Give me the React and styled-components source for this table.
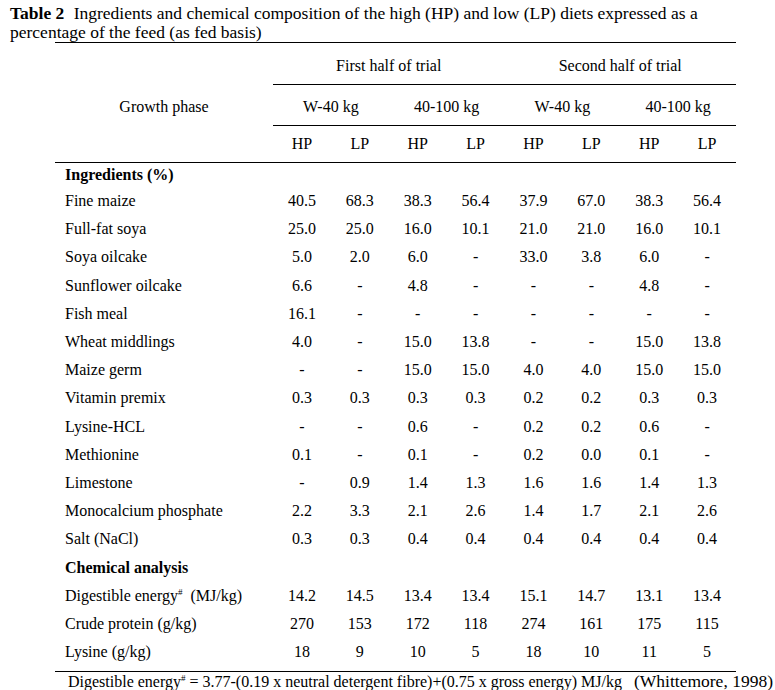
import React from "react";
import styled, { createGlobalStyle } from "styled-components";

const serif = `"Liberation Serif", "Times New Roman", serif`;

const GlobalStyle = createGlobalStyle`
  html, body {
    margin: 0;
    padding: 0;
    background: #fff;
  }
  body, table, td, th {
    font-family: ${serif};
    font-size: 16px;
    color: #000;
  }
`;

const Page = styled.div`
  width: 775px;
  padding-top: 4px;
  font-family: ${serif};
`;

const Caption = styled.p`
  margin: 0;
  padding-left: 10px;
  width: 735px;
  font-size: 17.5px;
  line-height: 19px;
`;

const Bold = styled.b`
  font-weight: bold;
  margin-right: 5px;
`;

const Table = styled.table`
  margin-left: 55px;
  width: 681px;
  table-layout: fixed;
  border-collapse: collapse;
  border-spacing: 0;
`;

const HeadCell = styled.th`
  font-weight: normal;
  text-align: center;
  line-height: 18px;
  padding: ${(p) => p.$pad};
  white-space: nowrap;
  border-top: ${(p) => (p.$top ? "1px solid #000" : "none")};
  border-bottom: ${(p) => (p.$rule ? "1px solid #000" : "none")};
`;

const Section = styled.td`
  font-weight: bold;
  padding: 0 0 0 10px;
  line-height: ${(p) => p.$h};
  text-align: left;
`;

const Label = styled.td`
  padding: 0 0 ${(p) => (p.$last ? "5px" : "0")} 10px;
  line-height: 28.2px;
  white-space: nowrap;
  border-bottom: ${(p) => (p.$last ? "1px solid #000" : "none")};
`;

const Value = styled.td`
  padding: 0 0 ${(p) => (p.$last ? "5px" : "0")};
  line-height: 28.2px;
  text-align: center;
  border-bottom: ${(p) => (p.$last ? "1px solid #000" : "none")};
`;

const Mark = styled.span`
  font-size: 9px;
  line-height: 0;
  vertical-align: 6px;
`;

const Footnote = styled.div`
  padding-left: 68px;
  line-height: 18px;
  white-space: pre;
`;

const Citation = styled.span`
  font-size: 17.5px;
`;

const columns = ["HP", "LP", "HP", "LP", "HP", "LP", "HP", "LP"];

const ingredients = [
  ["Fine maize", "40.5", "68.3", "38.3", "56.4", "37.9", "67.0", "38.3", "56.4"],
  ["Full-fat soya", "25.0", "25.0", "16.0", "10.1", "21.0", "21.0", "16.0", "10.1"],
  ["Soya oilcake", "5.0", "2.0", "6.0", "-", "33.0", "3.8", "6.0", "-"],
  ["Sunflower oilcake", "6.6", "-", "4.8", "-", "-", "-", "4.8", "-"],
  ["Fish meal", "16.1", "-", "-", "-", "-", "-", "-", "-"],
  ["Wheat middlings", "4.0", "-", "15.0", "13.8", "-", "-", "15.0", "13.8"],
  ["Maize germ", "-", "-", "15.0", "15.0", "4.0", "4.0", "15.0", "15.0"],
  ["Vitamin premix", "0.3", "0.3", "0.3", "0.3", "0.2", "0.2", "0.3", "0.3"],
  ["Lysine-HCL", "-", "-", "0.6", "-", "0.2", "0.2", "0.6", "-"],
  ["Methionine", "0.1", "-", "0.1", "-", "0.2", "0.0", "0.1", "-"],
  ["Limestone", "-", "0.9", "1.4", "1.3", "1.6", "1.6", "1.4", "1.3"],
  ["Monocalcium phosphate", "2.2", "3.3", "2.1", "2.6", "1.4", "1.7", "2.1", "2.6"],
  ["Salt (NaCl)", "0.3", "0.3", "0.4", "0.4", "0.4", "0.4", "0.4", "0.4"],
];

const analysis = [
  [<>Digestible energy<Mark>#</Mark>&nbsp; (MJ/kg)</>, "14.2", "14.5", "13.4", "13.4", "15.1", "14.7", "13.1", "13.4"],
  ["Crude protein (g/kg)", "270", "153", "172", "118", "274", "161", "175", "115"],
  ["Lysine (g/kg)", "18", "9", "10", "5", "18", "10", "11", "5"],
];

const DataRow = ({ row, last }) => (
  <tr>
    <Label $last={last}>{row[0]}</Label>
    {row.slice(1).map((v, i) => (
      <Value key={i} $last={last}>{v}</Value>
    ))}
  </tr>
);

export default function App() {
  return (
    <Page>
      <GlobalStyle />
      <Caption>
        <Bold>Table 2</Bold> Ingredients and chemical composition of the high (HP) and low (LP) diets
        expressed as a percentage of the feed (as fed basis)
      </Caption>
      <Table>
        <colgroup>
          <col style={{ width: 218 }} />
          {columns.map((_, i) => (
            <col key={i} />
          ))}
        </colgroup>
        <thead>
          <tr>
            <HeadCell $top $pad="14px 0 9px" />
            <HeadCell $top $rule $pad="14px 0 9px" colSpan={4}>First half of trial</HeadCell>
            <HeadCell $top $rule $pad="14px 0 9px" colSpan={4}>Second half of trial</HeadCell>
          </tr>
          <tr>
            <HeadCell $pad="13px 0 9px">Growth phase</HeadCell>
            <HeadCell $rule $pad="13px 0 9px" colSpan={2}>W-40 kg</HeadCell>
            <HeadCell $rule $pad="13px 0 9px" colSpan={2}>40-100 kg</HeadCell>
            <HeadCell $rule $pad="13px 0 9px" colSpan={2}>W-40 kg</HeadCell>
            <HeadCell $rule $pad="13px 0 9px" colSpan={2}>40-100 kg</HeadCell>
          </tr>
          <tr>
            <HeadCell $rule $pad="9px 0 9px" />
            {columns.map((c, i) => (
              <HeadCell key={i} $rule $pad="9px 0 9px">{c}</HeadCell>
            ))}
          </tr>
        </thead>
        <tbody>
          <tr>
            <Section colSpan={9} $h="24px">Ingredients (%)</Section>
          </tr>
          {ingredients.map((r) => (
            <DataRow key={r[0]} row={r} />
          ))}
          <tr>
            <Section colSpan={9} $h="28.2px">Chemical analysis</Section>
          </tr>
          {analysis.map((r, i) => (
            <DataRow key={i} row={r} last={i === analysis.length - 1} />
          ))}
        </tbody>
      </Table>
      <Footnote>
        Digestible energy<Mark>#</Mark> = 3.77-(0.19 x neutral detergent fibre)+(0.75 x gross energy) MJ/kg{"   "}
        <Citation>(Whittemore, 1998)</Citation>
      </Footnote>
    </Page>
  );
}
